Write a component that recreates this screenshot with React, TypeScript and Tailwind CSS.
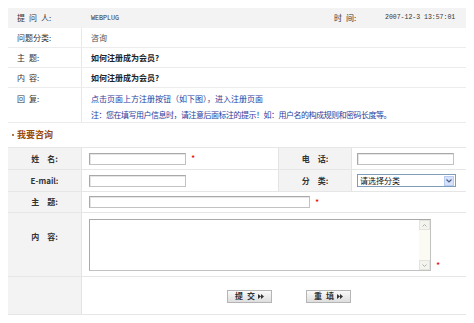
import React from 'react';

const cjk = "font-[family-name:'Noto_Sans_CJK_SC',sans-serif]";
const mono = "font-[family-name:'Liberation_Mono','Noto_Sans_CJK_SC',monospace]";

function Star() {
  return <span className="ml-[5px] text-[9px] leading-none text-[#e60000]">*</span>;
}

function TextInput({ w }: { w: string }) {
  return <div className={`${w} h-[12px] border border-[#c2c2c2] border-t-[#a9a9a9] border-l-[#a9a9a9] bg-white shadow-[inset_1px_1px_0_#e6e6e6]`} />;
}

function Arrows() {
  return (
    <svg width="6" height="5" viewBox="0 0 6 5" className="ml-[3px]">
      <path d="M0 0 L3 2.5 L0 5 Z M3 0 L6 2.5 L3 5 Z" fill="#333" />
    </svg>
  );
}

function Btn({ label }: { label: string }) {
  return (
    <button className="flex h-[13px] w-[45px] items-center justify-center border border-[#b5b5b5] bg-gradient-to-b from-[#fafafa] to-[#dedede] text-[8px] font-bold leading-none text-[#333]">
      <span className="whitespace-pre">{label}</span>
      <Arrows />
    </button>
  );
}

export default function App() {
  return (
    <div className={`h-[323px] w-[474px] bg-white pl-2 pt-2 text-[8px] text-[#333] ${cjk}`}>
      <div className="w-[458px]">
        {/* 问答信息 */}
        <div className="flex h-[20px] items-center bg-[#f3f3f3]">
          <div className="w-[74px] whitespace-pre pl-[9px]">{'提\u2002问\u2002人:'}</div>
          <div className={`w-[252px] pl-[9px] text-[6.7px] ${mono}`}>WEBPLUG</div>
          <div className="w-[51px] whitespace-pre">{'时\u2002间:'}</div>
          <div className={`text-[6.5px] ${mono}`}>2007-12-3 13:57:01</div>
        </div>
        <div className="flex h-[20px] border-b border-[#ececec]">
          <div className="flex w-[74px] items-center border-r border-[#e8e8e8] pl-[9px]">问题分类:</div>
          <div className="flex items-center pl-[9px] text-[#555]">咨询</div>
        </div>
        <div className="flex h-[20px] border-b border-[#ececec]">
          <div className="flex w-[74px] items-center whitespace-pre border-r border-[#e8e8e8] pl-[9px]">{'主\u2002题:'}</div>
          <div className="flex items-center pl-[9px] font-bold text-[#222]">如何注册成为会员?</div>
        </div>
        <div className="flex h-[20px] border-b border-[#ececec]">
          <div className="flex w-[74px] items-center whitespace-pre border-r border-[#e8e8e8] pl-[9px]">{'内\u2002容:'}</div>
          <div className="flex items-center pl-[9px] font-bold text-[#222]">如何注册成为会员?</div>
        </div>
        <div className="flex h-[35px] border-b border-[#ececec]">
          <div className="w-[74px] whitespace-pre border-r border-[#e8e8e8] pl-[9px] pt-[5px]">{'回\u2002复:'}</div>
          <div className="flex flex-col gap-[5px] pl-[9px] pt-[5px] text-[#1f3d9c]">
            <div className="leading-[11px]">点击页面上方注册按钮（如下图），进入注册页面</div>
            <div className="leading-[11px] tracking-[-0.5px]">注：您在填写用户信息时，请注意后面标注的提示！如：用户名的构成规则和密码长度等。</div>
          </div>
        </div>

        {/* 我要咨询 */}
        <div className="flex h-[24px] items-center pl-[4px]">
          <span className="mr-[3px] h-[2px] w-[2px] bg-[#b07a4a]" />
          <span className="text-[9px] font-bold text-[#9a4a0c]">我要咨询</span>
        </div>

        {/* 表单 */}
        <div className="border-t border-[#e6e6e6]">
          <div className="flex h-[22px] border-b border-[#e6e6e6]">
            <div className="flex w-[74px] items-center justify-center whitespace-pre border-r border-[#e3e3e3] bg-[#f3f3f3] font-bold">{'姓\u3000名:'}</div>
            <div className="flex w-[196px] items-center pl-[7px]">
              <TextInput w="w-[97px]" />
              <Star />
            </div>
            <div className="flex w-[74px] items-center justify-center whitespace-pre border-x border-[#e3e3e3] bg-[#f3f3f3] font-bold">{'电\u3000话:'}</div>
            <div className="flex flex-1 items-center pl-[5px]">
              <TextInput w="w-[97px]" />
            </div>
          </div>
          <div className="flex h-[22px] border-b border-[#e6e6e6]">
            <div className="flex w-[74px] items-center justify-center border-r border-[#e3e3e3] bg-[#f3f3f3] font-bold">E-mail:</div>
            <div className="flex w-[196px] items-center pl-[7px]">
              <TextInput w="w-[97px]" />
            </div>
            <div className="flex w-[74px] items-center justify-center whitespace-pre border-x border-[#e3e3e3] bg-[#f3f3f3] font-bold">{'分\u3000类:'}</div>
            <div className="flex flex-1 items-center pl-[5px]">
              <div className="flex h-[13px] w-[99px] items-center border border-[#7f9db9] bg-white">
                <span className="flex-1 pl-[2px] leading-none text-[#111]">请选择分类</span>
                <span className="mr-[1px] flex h-[10px] w-[10px] items-center justify-center border border-[#b8cbf3] bg-[#d6e2fb]">
                  <svg width="6" height="4" viewBox="0 0 6 4">
                    <path d="M0.5 0.5 L3 3 L5.5 0.5" stroke="#4d6185" strokeWidth="1.2" fill="none" />
                  </svg>
                </span>
              </div>
            </div>
          </div>
          <div className="flex h-[21px] border-b border-[#e6e6e6]">
            <div className="flex w-[74px] items-center justify-center whitespace-pre border-r border-[#e3e3e3] bg-[#f3f3f3] font-bold">{'主\u3000题:'}</div>
            <div className="flex flex-1 items-center pl-[7px]">
              <TextInput w="w-[221px]" />
              <Star />
            </div>
          </div>
          <div className="flex h-[64px] border-b border-[#e6e6e6]">
            <div className="flex w-[74px] justify-center whitespace-pre border-r border-[#e3e3e3] bg-[#f3f3f3] pt-[18px] font-bold">{'内\u3000容:'}</div>
            <div className="flex flex-1 items-end pb-[5px] pl-[7px] pt-[7px]">
              <div className="flex h-[52px] w-[342px] border border-[#c2c2c2] border-t-[#a9a9a9] border-l-[#a9a9a9] bg-white">
                <div className="flex-1" />
                <div className="flex w-[11px] flex-col justify-between bg-[#fbfbf4]">
                  <div className="flex h-[10px] items-center justify-center border border-[#e4e4dc] bg-[#f4f4ef]">
                    <svg width="5" height="3" viewBox="0 0 5 3"><path d="M0.5 2.5 L2.5 0.5 L4.5 2.5" stroke="#b0b0b0" fill="none" /></svg>
                  </div>
                  <div className="flex h-[10px] items-center justify-center border border-[#e4e4dc] bg-[#f4f4ef]">
                    <svg width="5" height="3" viewBox="0 0 5 3"><path d="M0.5 0.5 L2.5 2.5 L4.5 0.5" stroke="#b0b0b0" fill="none" /></svg>
                  </div>
                </div>
              </div>
              <span className="mb-[-1px]"><Star /></span>
            </div>
          </div>
          <div className="flex h-[38px] border-b border-[#e6e6e6]">
            <div className="w-[74px] border-r border-[#e3e3e3] bg-[#f3f3f3]" />
            <div className="flex flex-1 items-center gap-[34px] pl-[145px] pt-[1px]">
              <Btn label={'提\u2002交'} />
              <Btn label={'重\u2002填'} />
            </div>
          </div>
        </div>
      </div>
    </div>
  );
}
